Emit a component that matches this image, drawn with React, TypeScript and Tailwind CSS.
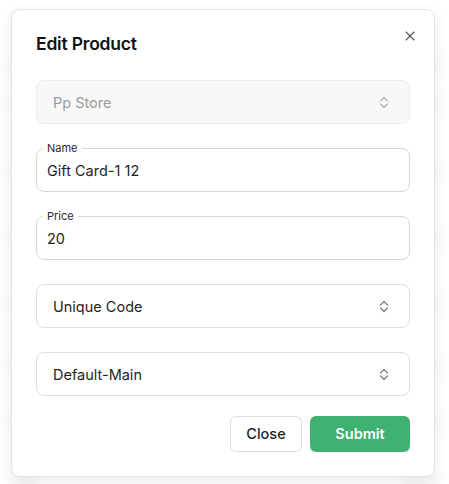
import React from "react";
import { X } from "lucide-react";

const font = { fontFamily: "Inter, 'Noto Sans', sans-serif" };

function Chevrons({ className = "" }: { className?: string }) {
  return (
    <svg width="10" height="13" viewBox="0 0 10 13" fill="none" className={className}>
      <polyline points="1.5,5 5,1.5 8.5,5" stroke="currentColor" strokeWidth="1.2" strokeLinecap="round" strokeLinejoin="round" />
      <polyline points="1.5,8 5,11.5 8.5,8" stroke="currentColor" strokeWidth="1.2" strokeLinecap="round" strokeLinejoin="round" />
    </svg>
  );
}

function SelectBox({ value, disabled }: { value: string; disabled?: boolean }) {
  return (
    <div
      className={
        disabled
          ? "h-[44px] rounded-lg border border-[#ececec] bg-[#f8f8f8] pl-4 pr-5 flex items-center justify-between"
          : "h-[44px] rounded-lg border border-[#dedede] bg-white pl-4 pr-5 flex items-center justify-between"
      }
    >
      <span className={disabled ? "text-[14.5px] text-[#9a9a9a] pt-px" : "text-[14.5px] text-[#1f1f1f] pt-px"}>{value}</span>
      <Chevrons className={disabled ? "text-[#b0b0b0]" : "text-[#7a7a7a]"} />
    </div>
  );
}

function OutlinedField({ label, value }: { label: string; value: string }) {
  return (
    <div className="relative h-[44px] rounded-lg border border-[#d6d6de] bg-white px-[10px] flex items-center">
      <span className="absolute -top-[7px] left-[6px] bg-white px-1 text-[11px] leading-[12px] text-[#2a2a2a]">
        {label}
      </span>
      <span className="text-[14.5px] text-[#1f1f1f] pt-[2px]">{value}</span>
    </div>
  );
}

function BackdropRows() {
  const rows = [62, 100, 168, 234, 300, 362, 418, 478];
  return (
    <div className="h-[484px] w-[449px] overflow-hidden bg-white">
      <div className="flex flex-col blur-[6px] opacity-60">
        {rows.map((top, i) => (
          <div key={i} className="flex justify-between px-2" style={{ marginTop: i === 0 ? top : top - rows[i - 1] - 8 }}>
            <div className="h-[8px] w-[30px] rounded bg-[#e6e6e6]" />
            <div className="h-[8px] w-[40px] rounded bg-[#e6e6e6]" />
          </div>
        ))}
      </div>
    </div>
  );
}

export default function App() {
  return (
    <div className="relative h-[484px] w-[449px] overflow-hidden bg-white" style={font}>
      <BackdropRows />

      {/* Dialog */}
      <div className="absolute left-[11px] top-[9px] w-[424px] rounded-[9px] border border-[#e3e3e3] bg-white px-6 pt-[22px] pb-6 shadow-[0_4px_16px_rgba(0,0,0,0.08)]">
        <button className="absolute right-[16px] top-[18px] text-[#555]">
          <X size={16} strokeWidth={1.6} />
        </button>

        <h2 className="text-[17.5px] leading-6 font-semibold text-[#111] tracking-[-0.2px]">Edit Product</h2>

        <div className="mt-6 flex flex-col gap-[24px]">
          <SelectBox value="Pp Store" disabled />
          <OutlinedField label="Name" value="Gift Card-1 12" />
          <OutlinedField label="Price" value="20" />
          <SelectBox value="Unique Code" />
          <SelectBox value="Default-Main" />
        </div>

        <div className="mt-[20px] flex justify-end gap-[8px]">
          <button className="h-[36px] w-[72px] rounded-md border border-[#dcdcdc] bg-white text-[14.5px] font-medium text-[#1f1f1f]">
            Close
          </button>
          <button className="h-[36px] w-[100px] rounded-md bg-[#3fb171] text-[14.5px] font-semibold text-white">
            Submit
          </button>
        </div>
      </div>
    </div>
  );
}
